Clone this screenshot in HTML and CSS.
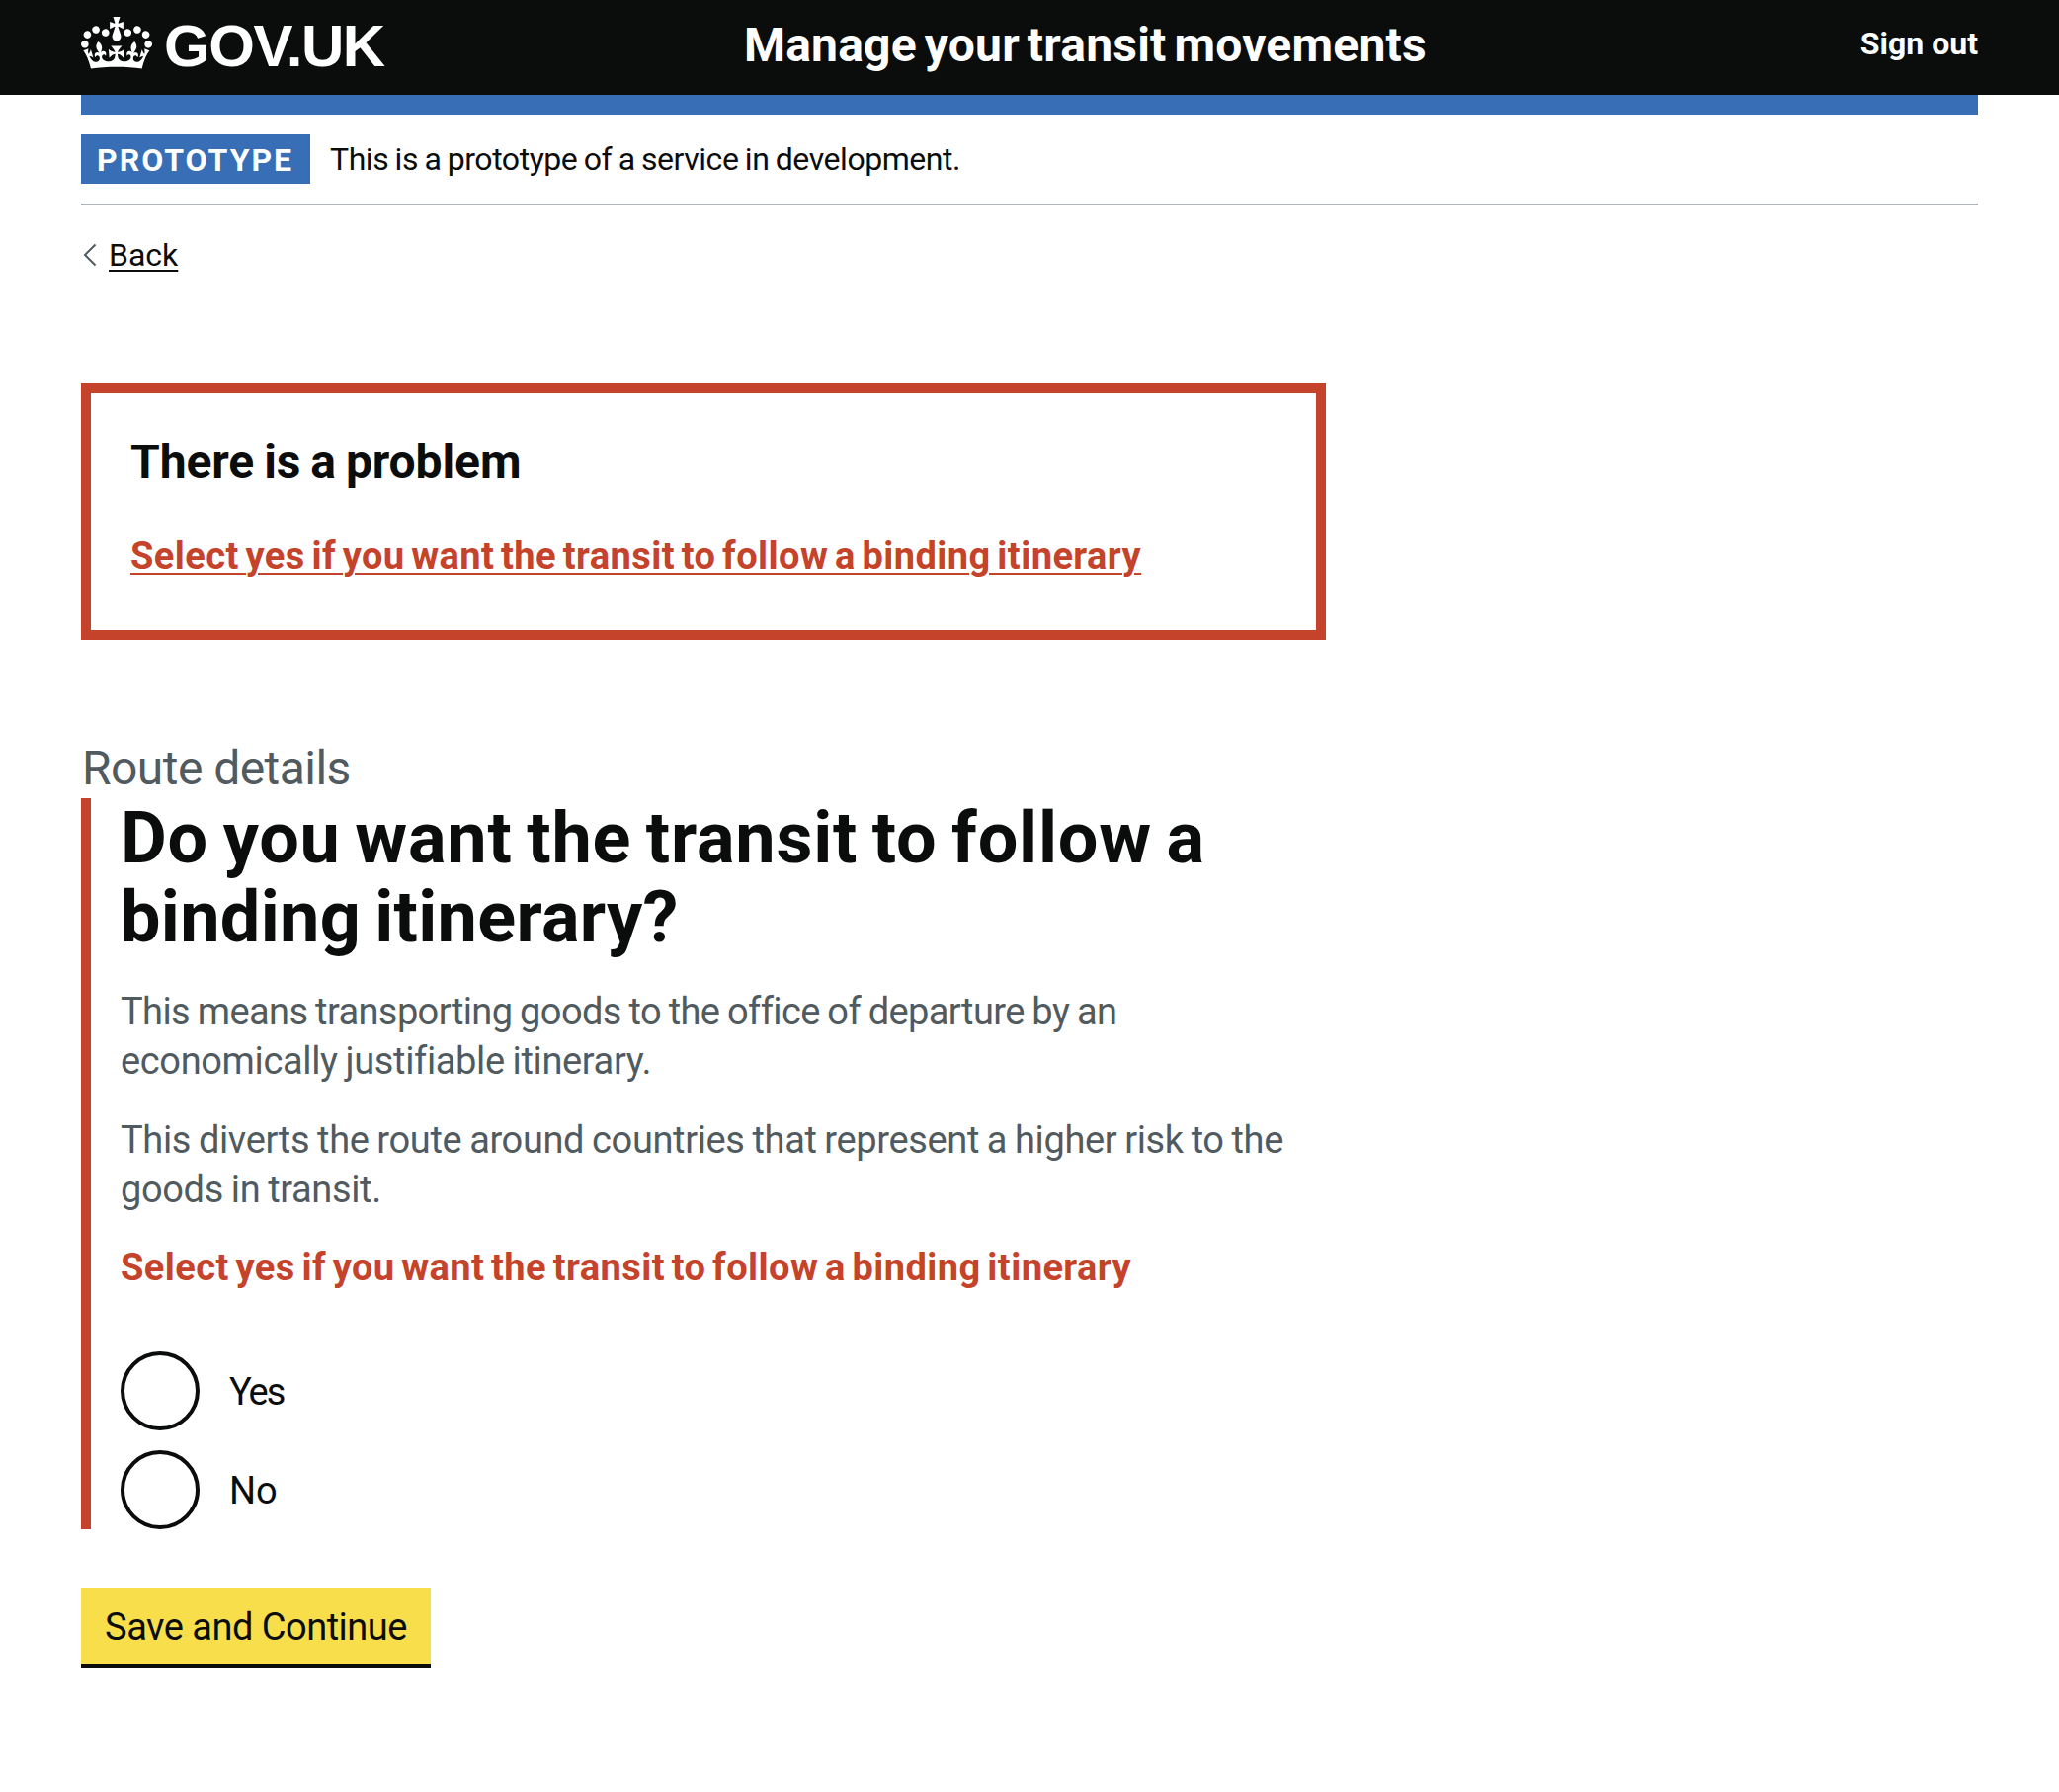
FILE: index.html
```
<!DOCTYPE html>
<html lang="en">
<head>
<meta charset="utf-8">
<title>Manage your transit movements</title>
<link rel="stylesheet" href="styles.css">
</head>
<body>
<header class="header">
  <div class="header-inner">
    <a class="logo" href="#">
      <svg class="crown" viewBox="0 0 132 97" width="72" height="53" fill="currentColor" aria-hidden="true"><path d="M25 30.2c3.5 1.5 7.7-.2 9.1-3.7 1.5-3.6-.2-7.8-3.9-9.2-3.6-1.4-7.6.3-9.1 3.9-1.4 3.5.3 7.5 3.9 9zM9 39.5c3.6 1.5 7.8-.2 9.2-3.7 1.5-3.6-.2-7.8-3.9-9.1-3.6-1.5-7.6.2-9.1 3.8-1.4 3.5.3 7.5 3.8 9zM4.4 57.2c3.5 1.5 7.7-.2 9.1-3.8 1.5-3.6-.2-7.7-3.9-9.1-3.5-1.5-7.6.3-9.1 3.8-1.4 3.5.3 7.6 3.9 9.1zm38.3-21.4c3.5 1.5 7.7-.2 9.1-3.8 1.5-3.6-.2-7.7-3.9-9.1-3.6-1.5-7.6.3-9.1 3.8-1.3 3.6.4 7.7 3.9 9.1zm64.4-5.6c-3.6 1.5-7.8-.2-9.1-3.7-1.5-3.6.2-7.8 3.8-9.2 3.6-1.4 7.7.3 9.2 3.9 1.3 3.5-.4 7.5-3.9 9zm15.9 9.3c-3.6 1.5-7.7-.2-9.1-3.7-1.5-3.6.2-7.8 3.7-9.1 3.6-1.5 7.7.2 9.2 3.8 1.5 3.5-.3 7.5-3.8 9zm4.7 17.7c-3.6 1.5-7.8-.2-9.2-3.8-1.5-3.6.2-7.7 3.9-9.1 3.6-1.5 7.7.3 9.2 3.8 1.3 3.5-.4 7.6-3.9 9.1zM89.3 35.8c-3.6 1.5-7.8-.2-9.2-3.8-1.4-3.6.2-7.7 3.9-9.1 3.6-1.5 7.7.3 9.2 3.8 1.4 3.6-.3 7.7-3.9 9.1zM69.7 17.7l8.9 4.7V9.3l-8.9 2.8c-.2-.3-.5-.6-.9-.9L72.4 0H59.6l3.5 11.2c-.3.3-.6.5-.9.9l-8.8-2.8v13.1l8.8-4.7c.3.3.6.7.9.9l-5 15.4v.1c-.2.8-.4 1.6-.4 2.4 0 4.1 3.1 7.5 7 8.1h.2c.3 0 .7.1 1 .1.4 0 .7 0 1-.1h.2c4-.6 7.1-4.1 7.1-8.1 0-.8-.1-1.7-.4-2.4V34l-5.1-15.4c.4-.2.7-.6 1-.9zM66 92.8c16.9 0 32.8 1.1 47.1 3.2 4-16.9 8.9-26.7 14-33.5l-9.6-3.4c1 4.9 1.1 7.2 0 10.2-1.5-1.4-3-4.3-4.2-8.7L108.6 76c2.8-2 5-3.2 7.5-3.3-4.4 9.4-10 11.9-13.6 11.2-4.3-.8-6.3-4.6-5.6-7.9 1-4.7 5.7-5.9 8-.5 4.3-8.7-3-11.4-7.6-8.8 7.1-7.2 7.9-13.5 2.1-21.1-8 6.1-8.1 12.3-4.5 20.8-4.7-5.4-12.1-2.5-9.5 6.2 3.4-5.2 7.9-2 7.2 3.1-.6 4.3-6.4 7.8-13.5 7.2-10.3-.9-10.9-8-11.2-13.8 2.5-.5 7.1 1.8 11 7.3L80.2 60c-4.1 4.4-8 5.3-12.3 5.4 1.4-4.4 8-11.6 8-11.6H55.5s6.4 7.2 7.9 11.6c-4.2-.1-8-1-12.3-5.4l1.4 16.4c3.9-5.5 8.5-7.7 10.9-7.3-.3 5.8-.9 12.8-11.1 13.8-7.2.6-12.9-2.9-13.5-7.2-.7-5 3.8-8.3 7.1-3.1 2.7-8.7-4.6-11.6-9.4-6.2 3.7-8.5 3.6-14.7-4.6-20.8-5.8 7.6-5 13.9 2.2 21.1-4.7-2.6-11.9.1-7.7 8.8 2.3-5.5 7.1-4.2 8.1.5.7 3.3-1.3 7.1-5.7 7.9-3.5.7-9-1.8-13.5-11.2 2.5.1 4.7 1.3 7.5 3.3l-4.7-15.4c-1.2 4.4-2.7 7.2-4.3 8.7-1.1-3-.9-5.3 0-10.2l-9.5 3.4c5 6.9 9.9 16.7 14 33.5 14.8-2.1 30.8-3.2 47.7-3.2z"/></svg>
      <span class="logo-text">GOV.UK</span>
    </a>
    <a class="service-name" href="#">Manage your transit movements</a>
    <a class="sign-out" href="#">Sign out</a>
  </div>
</header>
<div class="container">
  <div class="phase-banner">
    <strong class="tag">Prototype</strong>
    <span class="phase-text">This is a prototype of a service in development.</span>
  </div>
  <a class="back-link" href="#">
    <svg class="chevron" viewBox="0 0 14 24" width="14" height="24" fill="none" stroke="#505a5f" stroke-width="2" aria-hidden="true"><path d="M12.5 1.5 2 12l10.5 10.5"/></svg>
    <span class="back-text">Back</span>
  </a>
  <main class="main">
    <section class="error-summary">
      <h2 class="error-title">There is a problem</h2>
      <a class="error-link" href="#">Select yes if you want the transit to follow a binding itinerary</a>
    </section>
    <p class="caption">Route details</p>
    <form class="question">
      <h1 class="heading">Do you want the transit to follow a<br><span class="heading-end">binding itinerary?</span></h1>
      <p class="hint"><span class="hint-tight">This means transporting goods to the office of departure by an</span><br>economically justifiable itinerary.</p>
      <p class="hint">This diverts the route around countries that represent a higher risk to the<br>goods in transit.</p>
      <p class="error-message">Select yes if you want the transit to follow a binding itinerary</p>
      <div class="radios">
        <label class="radio"><input class="radio-input" type="radio" name="binding"><span class="radio-label yes">Yes</span></label>
        <label class="radio"><input class="radio-input" type="radio" name="binding"><span class="radio-label">No</span></label>
      </div>
    </form>
    <button class="button" type="button">Save and Continue</button>
  </main>
</div>
</body>
</html>
```
FILE: styles.css
```
* { box-sizing: border-box; }
body {
  margin: 0;
  background: #fff;
  color: #0b0c0c;
  font-family: Roboto, "Liberation Sans", sans-serif;
  font-size: 38px;
  line-height: 50px;
}
h1, h2, p { margin: 0; }
a { color: inherit; text-decoration: none; }
.header { background: #0b0c0c; color: #fff; height: 96px; padding: 0 82px; }
.header-inner { display: flex; align-items: center; height: 96px; }
.logo { display: flex; align-items: center; width: 671px; height: 96px; gap: 12px; }
.crown { display: block; margin-bottom: 9px; }
.logo-text { padding-bottom: 3px; font-family: "Liberation Sans", Arial, sans-serif; font-size: 60px; font-weight: 700; line-height: 60px; letter-spacing: -1.4px; }
.service-name { font-size: 48px; font-weight: 700; line-height: 60px; padding-bottom: 4px; letter-spacing: .2px; word-spacing: -4.2px; }
.sign-out { margin-left: auto; font-size: 32px; font-weight: 700; line-height: 40px; padding-bottom: 8px; }
.container { margin: 0 82px; border-top: 20px solid #386eb5; }
.phase-banner { display: flex; align-items: center; gap: 20px; padding: 20px 0; border-bottom: 2px solid #b1b4b6; font-size: 32px; line-height: 40px; }
.tag { width: 232px; height: 50px; padding: 6px 16px 4px; background: #386eb5; color: #fff; text-transform: uppercase; letter-spacing: 2px; }
.phase-text { letter-spacing: -.45px; word-spacing: -1.1px; }
.back-link { display: flex; align-items: center; gap: 12px; width: fit-content; margin: 30px 0 110px; padding-left: 2px; font-size: 32px; line-height: 40px; }
.back-text { text-decoration: underline; text-decoration-thickness: 2px; text-underline-offset: 4px; }
.main { width: 1260px; }
.error-summary { height: 260px; padding: 40px; border: 10px solid #c4432a; margin-bottom: 100px; }
.error-title { font-size: 48px; line-height: 60px; margin-bottom: 40px; letter-spacing: -.1px; word-spacing: -1.8px; }
.error-link, .error-message { color: #c4432a; font-weight: 700; letter-spacing: .44px; word-spacing: -3.2px; }
.error-link { text-decoration: underline; text-decoration-thickness: 2px; text-underline-offset: 4px; }
.caption { padding-left: 1px; color: #505a5f; font-size: 48px; line-height: 60px; letter-spacing: -.55px; }
.question { border-left: 10px solid #c4432a; padding-left: 30px; }
.heading { padding-top: 1px; margin-bottom: 30px; font-size: 72px; line-height: 80px; letter-spacing: .8px; word-spacing: -4.1px; white-space: nowrap; }
.heading-end { letter-spacing: .3px; }
.hint { color: #505a5f; margin-bottom: 30px; letter-spacing: -.36px; word-spacing: -1.2px; white-space: nowrap; }
.hint-tight { letter-spacing: -.6px; }
.error-message { margin: -1px 0 60px; }
.radios { display: flex; flex-direction: column; gap: 20px; }
.radio { display: flex; align-items: center; gap: 30px; height: 80px; }
.radio-label { padding-top: 2px; }
.yes { letter-spacing: -2px; }
.radio-input { appearance: none; width: 80px; height: 80px; margin: 0; border: 4px solid #0b0c0c; border-radius: 50%; }
.button { display: block; width: 354px; height: 80px; margin-top: 60px; padding: 2px 0 0; border: 0; border-bottom: 4px solid #0b0c0c; background: #f8de4b; color: #0b0c0c; font: inherit; letter-spacing: -.5px; }
```
